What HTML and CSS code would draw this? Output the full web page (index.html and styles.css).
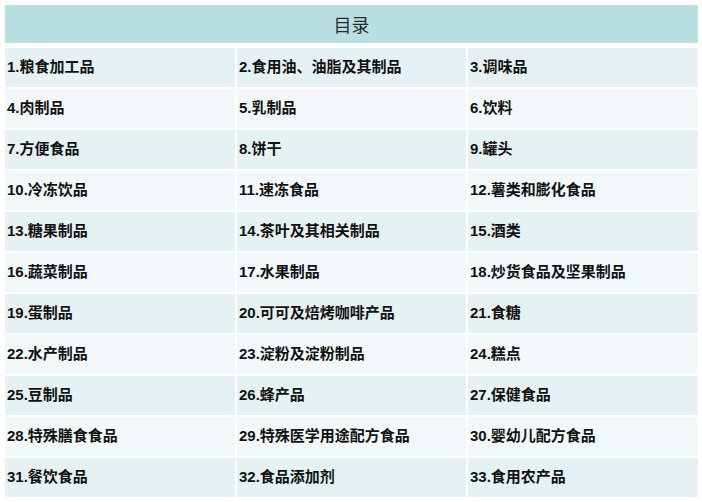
FILE: index.html
```html
<!DOCTYPE html>
<html lang="zh-CN">
<head>
<meta charset="utf-8">
<title>目录</title>
<link rel="stylesheet" href="styles.css">
</head>
<body>
<div class="catalog">
  <div class="title">目录</div>
  <div class="grid">
    <div class="cell odd">1.粮食加工品</div><div class="cell odd">2.食用油、油脂及其制品</div><div class="cell odd">3.调味品</div>
    <div class="cell even">4.肉制品</div><div class="cell even">5.乳制品</div><div class="cell even">6.饮料</div>
    <div class="cell odd">7.方便食品</div><div class="cell odd">8.饼干</div><div class="cell odd">9.罐头</div>
    <div class="cell even">10.冷冻饮品</div><div class="cell even">11.速冻食品</div><div class="cell even">12.薯类和膨化食品</div>
    <div class="cell odd">13.糖果制品</div><div class="cell odd">14.茶叶及其相关制品</div><div class="cell odd">15.酒类</div>
    <div class="cell even">16.蔬菜制品</div><div class="cell even">17.水果制品</div><div class="cell even">18.炒货食品及坚果制品</div>
    <div class="cell odd">19.蛋制品</div><div class="cell odd">20.可可及焙烤咖啡产品</div><div class="cell odd">21.食糖</div>
    <div class="cell even">22.水产制品</div><div class="cell even">23.淀粉及淀粉制品</div><div class="cell even">24.糕点</div>
    <div class="cell odd">25.豆制品</div><div class="cell odd">26.蜂产品</div><div class="cell odd">27.保健食品</div>
    <div class="cell even">28.特殊膳食食品</div><div class="cell even">29.特殊医学用途配方食品</div><div class="cell even">30.婴幼儿配方食品</div>
    <div class="cell odd">31.餐饮食品</div><div class="cell odd">32.食品添加剂</div><div class="cell odd">33.食用农产品</div>
  </div>
</div>
</body>
</html>
```
FILE: styles.css
```css
html, body {
  margin: 0;
  padding: 0;
  background: #ffffff;
}
.catalog {
  padding: 5px 4px 0 5px;
  width: 693px;
}
.title {
  height: 38px;
  background: #b9dfe3;
  display: flex;
  align-items: center;
  justify-content: center;
  font-family: "Noto Sans CJK SC", sans-serif;
  font-size: 18px;
  font-weight: 400;
  color: #2b2b2b;
  line-height: 1;
}
.grid {
  margin-top: 5px;
  display: grid;
  grid-template-columns: 230px 229px 230px;
  grid-auto-rows: 39px;
  column-gap: 2px;
  row-gap: 2px;
}
.cell {
  display: flex;
  align-items: center;
  padding-left: 2px;
  padding-bottom: 3px;
  box-sizing: border-box;
  font-family: "Liberation Sans", "Noto Sans CJK SC", sans-serif;
  font-size: 15px;
  font-weight: 700;
  color: #111111;
  line-height: 1;
  white-space: nowrap;
}
.odd {
  background: #e5f1f2;
}
.even {
  background: #f2f8f9;
}
```
